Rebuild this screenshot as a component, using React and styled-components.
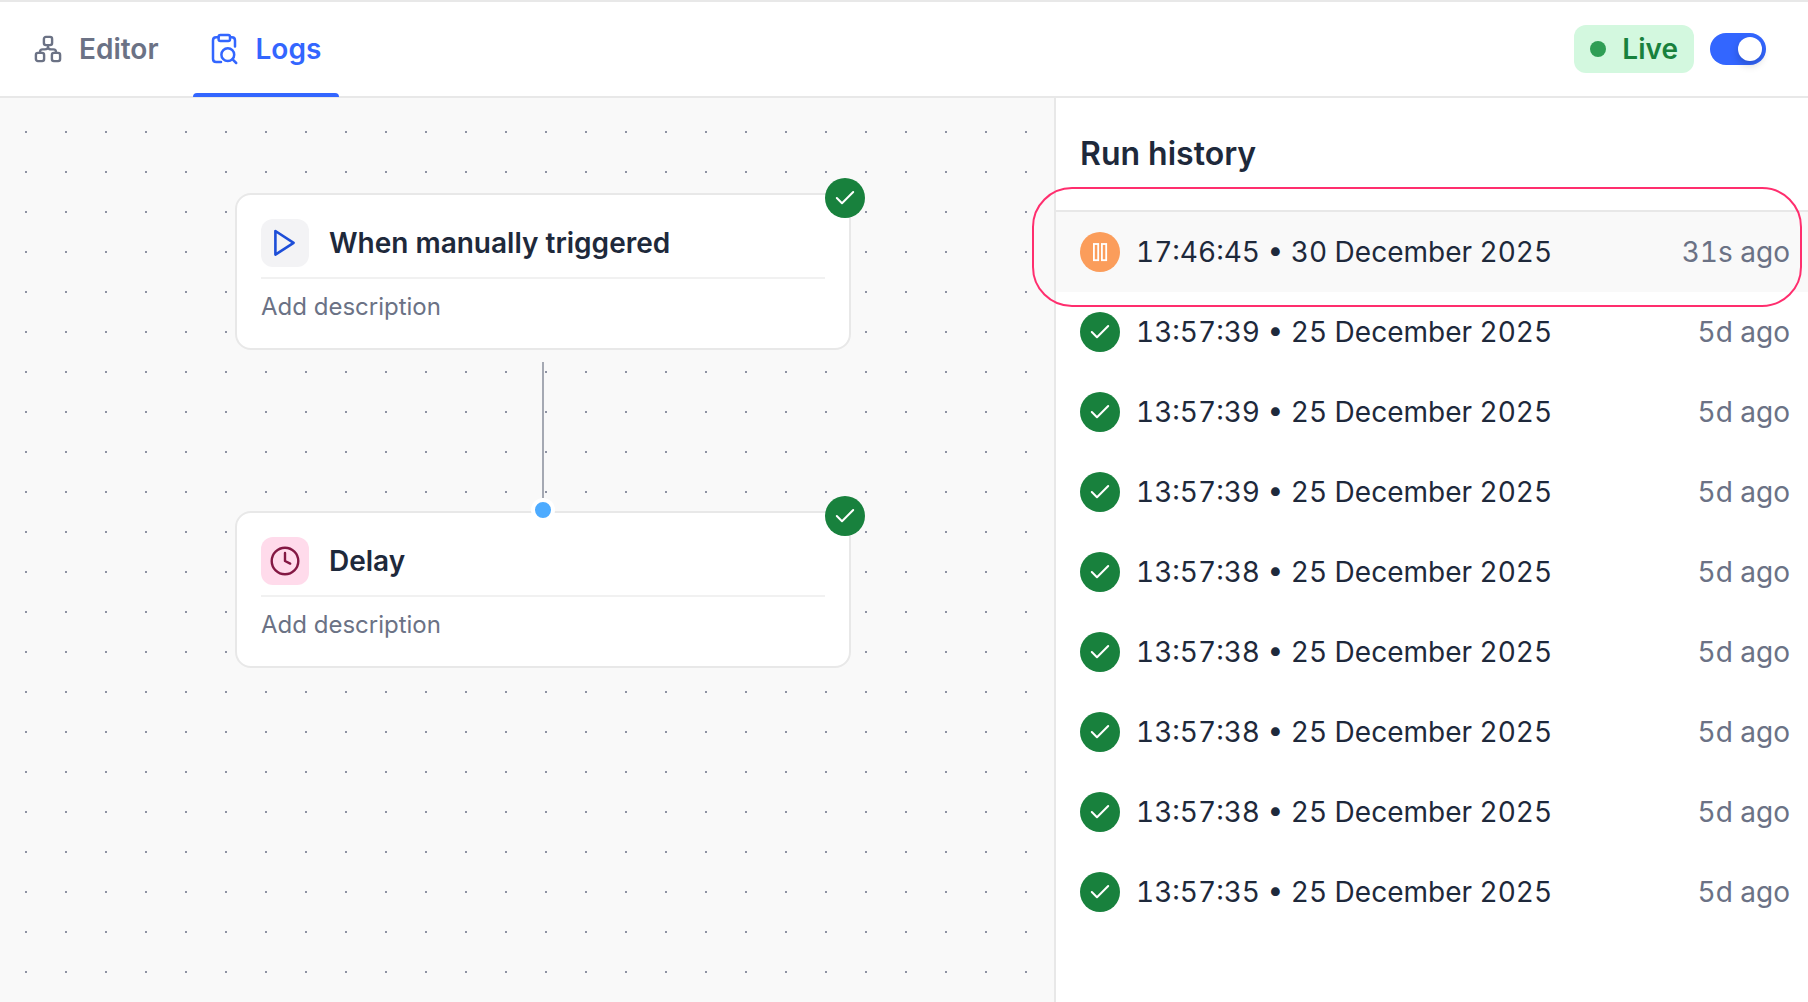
import React, { useState } from 'react';
import styled, { createGlobalStyle } from 'styled-components';

const GlobalStyle = createGlobalStyle`
  * {
    box-sizing: border-box;
  }

  body {
    margin: 0;
    font-family: Inter, 'Liberation Sans', sans-serif;
    font-optical-sizing: none;
    font-size: 28px;
    line-height: 40px;
    color: #1e293b;
    background: #ffffff;
    -webkit-font-smoothing: antialiased;
  }

  button {
    font: inherit;
    color: inherit;
    border: none;
    background: none;
    padding: 0;
    cursor: pointer;
  }
`

const NODES = [
  { id: 'trigger', title: 'When manually triggered', icon: 'play', x: 235, y: 95 },
  { id: 'delay', title: 'Delay', icon: 'clock', x: 235, y: 413, connected: true },
];

const RUNS = [
  { time: '17:46:45', date: '30 December 2025', ago: '31s ago', paused: true },
  { time: '13:57:39', date: '25 December 2025', ago: '5d ago' },
  { time: '13:57:39', date: '25 December 2025', ago: '5d ago' },
  { time: '13:57:39', date: '25 December 2025', ago: '5d ago' },
  { time: '13:57:38', date: '25 December 2025', ago: '5d ago' },
  { time: '13:57:38', date: '25 December 2025', ago: '5d ago' },
  { time: '13:57:38', date: '25 December 2025', ago: '5d ago' },
  { time: '13:57:38', date: '25 December 2025', ago: '5d ago' },
  { time: '13:57:35', date: '25 December 2025', ago: '5d ago' },
];

// ICONS

const EditorIcon = () => (
  <svg width="28" height="28" viewBox="0 0 28 28" fill="none" stroke="currentColor" strokeWidth="2.4" strokeLinejoin="round">
    <rect x="9.9" y="1.9" width="8.2" height="8.2" rx="2" />
    <rect x="1.9" y="17.9" width="8.2" height="8.2" rx="2" />
    <rect x="17.9" y="17.9" width="8.2" height="8.2" rx="2" />
    <path d="M14 10.1V12.6M6 17.9V17C6 15.4 7 14.4 8.6 14.4H10.5C12.5 14.4 14 13.9 14 12C14 13.9 15.5 14.4 17.5 14.4H19.4C21 14.4 22 15.4 22 17V17.9" />
  </svg>
)

const LogsIcon = () => (
  <svg width="28" height="32" viewBox="0 0 28 32" fill="none" stroke="currentColor" strokeWidth="2.5" strokeLinecap="round" strokeLinejoin="round">
    <rect x="7.6" y="2" width="11.4" height="6" rx="1.8" />
    <path d="M7.4 4.2H5.2C3.3 4.2 2 5.5 2 7.4V25.8C2 27.8 3.3 29.1 5.2 29.1H10" />
    <path d="M19.2 4.2H20.8C22.7 4.2 24 5.5 24 7.4V13.5" />
    <circle cx="16.8" cy="21.7" r="6.4" />
    <path d="M21.6 26.4L25.2 30" />
  </svg>
)

const PlayIcon = () => (
  <svg width="32" height="32" viewBox="0 0 32 32" fill="none" stroke="#1d4ed8" strokeWidth="2.6" strokeLinejoin="round">
    <path d="M6.4 4V27.6L24.6 15.8Z" />
  </svg>
)

const ClockIcon = () => (
  <svg width="32" height="32" viewBox="0 0 32 32" fill="none" stroke="#831843" strokeWidth="2.4" strokeLinecap="round" strokeLinejoin="round">
    <circle cx="16" cy="16" r="13.3" />
    <path d="M16 8V16L21.2 18.6" />
  </svg>
)

const CheckIcon = () => (
  <svg width="40" height="40" viewBox="0 0 40 40" fill="none" stroke="#ffffff" strokeWidth="2" strokeLinecap="round" strokeLinejoin="round">
    <path d="M11.8 20L17 25.3L28.2 14" />
  </svg>
)

const PauseIcon = () => (
  <svg width="40" height="40" viewBox="0 0 40 40" fill="none" stroke="#ffffff" strokeWidth="1.8">
    <rect x="13.9" y="12" width="4.3" height="16.2" />
    <rect x="21.9" y="12" width="4.3" height="16.2" />
  </svg>
)

const App = () => {
  const [tab, setTab] = useState('logs');
  const [live, setLive] = useState(true);

  return (
    <>
    <GlobalStyle />
    <Page>
      <TopBar>
        <Tabs>
          <Tab type="button" $active={tab === 'editor'} onClick={() => setTab('editor')}>
            <EditorIcon /> Editor
          </Tab>
          <Tab type="button" $active={tab === 'logs'} onClick={() => setTab('logs')}>
            <LogsIcon /> Logs
          </Tab>
        </Tabs>
        <Status>
          <LiveBadge htmlFor="live"><LiveDot />Live</LiveBadge>
          <Toggle id="live" type="checkbox" checked={live} onChange={(e) => setLive(e.target.checked)} />
        </Status>
      </TopBar>

      <Main>
        <Canvas>
          <Connector />
          {NODES.map((node) => (
            <Node key={node.id} $x={node.x} $y={node.y}>
              <NodeHeader>
                <NodeIcon $pink={node.icon === 'clock'}>
                  {node.icon === 'clock' ? <ClockIcon /> : <PlayIcon />}
                </NodeIcon>
                <NodeTitle>{node.title}</NodeTitle>
              </NodeHeader>
              <Description type="button">Add description</Description>
              <NodeStatus><CheckIcon /></NodeStatus>
              {node.connected && <Handle />}
            </Node>
          ))}
        </Canvas>

        <Panel>
          <PanelTitle>Run history</PanelTitle>
          <RunList>
            {RUNS.map((run, i) => (
              <li key={i}>
                <Run type="button" $selected={run.paused}>
                  <StatusCircle $paused={run.paused}>
                    {run.paused ? <PauseIcon /> : <CheckIcon />}
                  </StatusCircle>
                  <RunDate>{run.time} • {run.date}</RunDate>
                  <RunAgo>{run.ago}</RunAgo>
                </Run>
              </li>
            ))}
            <Highlight aria-hidden="true" />
          </RunList>
        </Panel>
      </Main>
    </Page>
    </>
  )
}

const Page = styled.div`
  min-height: 100vh;
  display: flex;
  flex-direction: column;
`

// TOP BAR

const TopBar = styled.header`
  display: flex;
  justify-content: space-between;
  border-top: 2px solid #e8e8e8;
  border-bottom: 2px solid #e8e8e8;
  padding: 0 42px 0 16px;
`

const Tabs = styled.nav`
  display: flex;
  gap: 16px;
`

const Tab = styled.button`
  position: relative;
  display: flex;
  align-items: center;
  gap: 17px;
  height: 94px;
  padding: 0 18px;
  font-weight: 600;
  color: ${(props) => (props.$active ? '#3366ff' : '#6b7285')};

  &::after {
    content: '';
    position: absolute;
    left: 0;
    right: 0;
    bottom: -1px;
    height: 4px;
    border-radius: 4px 4px 0 0;
    background: ${(props) => (props.$active ? '#3366ff' : 'transparent')};
  }
`

const Status = styled.div`
  display: flex;
  align-items: center;
  gap: 16px;
`

const LiveBadge = styled.label`
  display: flex;
  align-items: center;
  gap: 16px;
  height: 48px;
  padding: 0 16px;
  border-radius: 12px;
  font-weight: 600;
  color: #18813d;
  background: #d3f8df;
`

const LiveDot = styled.span`
  width: 16px;
  height: 16px;
  border-radius: 50%;
  background: #2f9e55;
`

const Toggle = styled.input`
  appearance: none;
  width: 56px;
  height: 32px;
  margin: 0;
  padding: 4px;
  border-radius: 16px;
  background: #cbd0da;
  cursor: pointer;

  &::before {
    content: '';
    display: block;
    width: 24px;
    height: 24px;
    border-radius: 50%;
    background: #ffffff;
    box-shadow: 0 4px 8px #00000033;
  }

  &:checked {
    background: #3366ff;
  }

  &:checked::before {
    margin-left: auto;
  }
`

const Main = styled.main`
  flex: 1;
  display: flex;
`

// CANVAS

const Canvas = styled.section`
  position: relative;
  flex: 1;
  min-width: 0;
  overflow: hidden;
  background-color: #f9f9f9;
  background-image: radial-gradient(circle, #8f93a3 1px, transparent 1px);
  background-size: 40px 40px;
  background-position: 6px 14px;
`

const Connector = styled.div`
  position: absolute;
  left: 542px;
  top: 264px;
  width: 2px;
  height: 136px;
  background: #a5a9b3;
`

const Node = styled.article`
  position: absolute;
  left: ${(props) => props.$x}px;
  top: ${(props) => props.$y}px;
  width: 616px;
  padding: 24px 24px 25px;
  border: 2px solid #e8e8e8;
  border-radius: 16px;
  background: #ffffff;
`

const NodeHeader = styled.div`
  display: flex;
  align-items: center;
  gap: 20px;
  padding-bottom: 10px;
  border-bottom: 2px solid #f1f1f1;
`

const NodeIcon = styled.div`
  display: flex;
  align-items: center;
  justify-content: center;
  width: 48px;
  height: 48px;
  border-radius: 12px;
  background: ${(props) => (props.$pink ? '#ffdbeb' : '#f3f3f5')};
`

const NodeTitle = styled.h2`
  margin: 0;
  font-size: 28px;
  font-weight: 600;
`

const Description = styled.button`
  display: block;
  margin-top: 12px;
  font-size: 24px;
  line-height: 32px;
  color: #6b7285;
`

const StatusCircle = styled.span`
  display: flex;
  width: 40px;
  height: 40px;
  border-radius: 50%;
  background: ${(props) => (props.$paused ? '#fb9d5b' : '#18813d')};
`

const NodeStatus = styled(StatusCircle)`
  position: absolute;
  top: -17px;
  right: -16px;
`

const Handle = styled.span`
  position: absolute;
  top: -15px;
  left: 294px;
  width: 24px;
  height: 24px;
  border: 4px solid #ffffff;
  border-radius: 50%;
  background: #4dabff;
`

// RUN HISTORY

const Panel = styled.aside`
  flex: 0 0 754px;
  border-left: 2px solid #e8e8e8;
  background: #ffffff;
`

const PanelTitle = styled.h1`
  margin: 0;
  padding: 36px 24px;
  font-size: 32px;
  line-height: 40px;
  font-weight: 600;
`

const RunList = styled.ul`
  position: relative;
  margin: 0;
  padding: 0;
  list-style: none;
  border-top: 2px solid #e8e8e8;
`

const Run = styled.button`
  display: flex;
  align-items: center;
  gap: 16px;
  width: 100%;
  height: 80px;
  padding: 0 18px 0 24px;
  font-variant-numeric: tabular-nums;
  background: ${(props) => (props.$selected ? '#f9f9f9' : '#ffffff')};
`

const RunDate = styled.span`
  flex: 1;
  text-align: left;
`

const RunAgo = styled.span`
  color: #6b7285;
`

const Highlight = styled.li`
  position: absolute;
  top: -25px;
  left: -24px;
  right: 6px;
  height: 120px;
  border: 2px solid #ff2e6e;
  border-radius: 40px;
  pointer-events: none;
`

export default App
